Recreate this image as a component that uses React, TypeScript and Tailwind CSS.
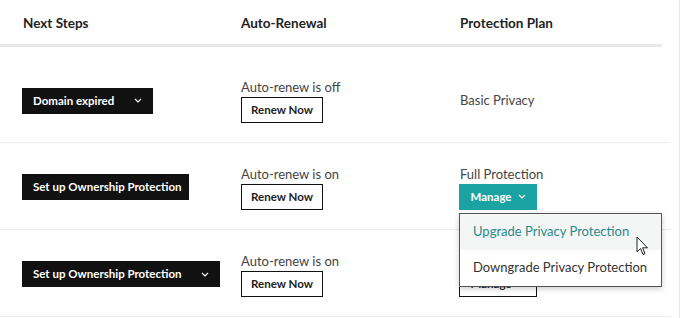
import React from "react";

function Chevron({ className }: { className?: string }) {
  return (
    <svg width="8" height="5" viewBox="0 0 8 5" className={className}>
      <polyline points="1,1 4,4 7,1" fill="none" stroke="currentColor" strokeWidth="1.2" />
    </svg>
  );
}

function StepButton({ label, dropdown, width }: { label: string; dropdown?: boolean; width: string }) {
  return (
    <button
      className={`${width} h-[26px] bg-[#111111] text-white text-[11.5px] font-bold whitespace-nowrap flex items-center justify-between pl-[11px] pr-[11px]`}
    >
      <span>{label}</span>
      {dropdown && <Chevron className="text-white" />}
    </button>
  );
}

function AutoRenew({ on }: { on: boolean }) {
  return (
    <div className="flex flex-col items-start">
      <span className="text-[13px] leading-[18px] text-[#444]">Auto-renew is {on ? "on" : "off"}</span>
      <button className="mt-[1px] w-[82px] h-[26px] border-[1.5px] border-[#111] text-[11.5px] font-bold text-[#222]">
        Renew Now
      </button>
    </div>
  );
}

export default function App() {
  return (
    <div
      className="w-[680px] h-[318px] bg-white relative overflow-hidden border-r border-[#e6e6e6]"
      style={{ fontFamily: 'Lato, "Open Sans", sans-serif' }}
    >
      <div className="w-[670px]">
        {/* header */}
        <div className="h-[44px] pt-[2px] flex items-center text-[13.5px] font-bold text-[#222] pl-[23px]">
          <div className="w-[218px]">Next Steps</div>
          <div className="w-[219px]">Auto-Renewal</div>
          <div>Protection Plan</div>
        </div>
        <div className="w-[662px] h-[3px] bg-[#e8e8e8]" />

        {/* row 1 */}
        <div className="h-[96px] pt-[12px] flex items-center pl-[22px] border-b border-[#ececec]">
          <div className="w-[219px]">
            <StepButton label="Domain expired" dropdown width="w-[131px]" />
          </div>
          <div className="w-[219px]">
            <AutoRenew on={false} />
          </div>
          <div className="text-[13px] text-[#444]">Basic Privacy</div>
        </div>

        {/* row 2 */}
        <div className="h-[87px] pt-[2px] flex items-center pl-[22px] border-b border-[#ececec]">
          <div className="w-[219px]">
            <StepButton label="Set up Ownership Protection" width="w-[167px]" />
          </div>
          <div className="w-[219px]">
            <AutoRenew on />
          </div>
          <div className="relative flex flex-col items-start -ml-px">
            <span className="text-[13px] leading-[18px] text-[#444] ml-px">Full Protection</span>
            <button className="mt-[1px] w-[78px] h-[26px] bg-[#1ba3a3] text-white text-[11.5px] font-bold flex items-center justify-center gap-[6px]">
              Manage
              <Chevron />
            </button>
            {/* dropdown menu */}
            <div className="absolute left-0 top-[48px] z-10 w-[203px] bg-white border border-[#555] shadow-[0_2px_6px_rgba(0,0,0,0.2)] text-[13px]">
              <div className="h-[36px] flex items-center pl-[13px] bg-[#f4f5f5] text-[#2a8a8a]">
                Upgrade Privacy Protection
              </div>
              <div className="h-[36px] flex items-center pl-[13px] text-[#333]">
                Downgrade Privacy Protection
              </div>
            </div>
          </div>
        </div>

        {/* row 3 */}
        <div className="h-[87px] pt-[2px] flex items-center pl-[22px] border-b border-[#ececec]">
          <div className="w-[219px]">
            <StepButton label="Set up Ownership Protection" dropdown width="w-[198px]" />
          </div>
          <div className="w-[219px]">
            <AutoRenew on />
          </div>
          <div className="flex flex-col items-start -ml-px pt-[19px]">
            <button className="w-[78px] h-[26px] border-[1.5px] border-[#111] text-[#222] text-[11.5px] font-bold flex items-center justify-center gap-[6px]">
              Manage
              <Chevron />
            </button>
          </div>
        </div>
      </div>

      {/* mouse cursor */}
      <svg className="absolute left-[636px] top-[236px] z-20" width="13" height="20" viewBox="0 0 13 20">
        <path d="M1 1 L1 16 L4.5 12.5 L7 18.5 L9 17.6 L6.6 11.8 L11.5 11.8 Z" fill="white" stroke="#222" strokeWidth="1" strokeLinejoin="round" />
      </svg>
    </div>
  );
}
